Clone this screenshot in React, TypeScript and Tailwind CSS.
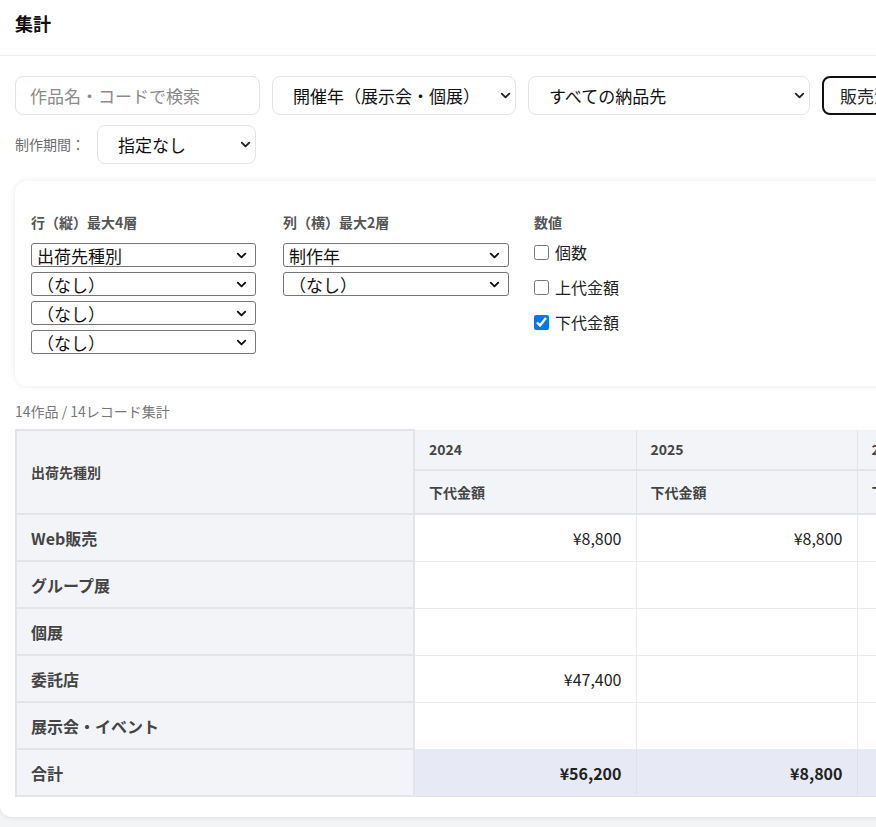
import React from 'react';
import { ChevronDown } from 'lucide-react';

const rowLayers = ['出荷先種別', '（なし）', '（なし）', '（なし）'];
const colLayers = ['制作年', '（なし）'];
const years = ['2024', '2025', '2026'];

const rows = [
  { name: 'Web販売', values: ['¥8,800', '¥8,800', ''] },
  { name: 'グループ展', values: ['', '', ''] },
  { name: '個展', values: ['', '', ''] },
  { name: '委託店', values: ['¥47,400', '', ''] },
  { name: '展示会・イベント', values: ['', '', ''] },
];
const totals = ['¥56,200', '¥8,800', '', '¥65,000'];

// native-looking compact select used in the pivot settings
function LayerSelect({ value }: { value: string }) {
  return (
    <div className="flex h-[24px] w-full items-center justify-between rounded-[3px] border border-[#767676] bg-white pl-[5px] pr-[6px] text-[17px] leading-none text-[#111]">
      <span>{value}</span>
      <ChevronDown className="h-[15px] w-[15px]" strokeWidth={3} />
    </div>
  );
}

function FilterSelect({ value, width }: { value: string; width: string }) {
  return (
    <div className={`relative h-[39px] ${width}`}>
      <select className="h-full w-full appearance-none rounded-lg border border-[#e3e4e8] bg-white px-5 text-[17px] text-[#111]">
        <option>{value}</option>
      </select>
      <ChevronDown className="pointer-events-none absolute right-[3px] top-[12px] h-[15px] w-[15px]" strokeWidth={3} />
    </div>
  );
}

export default function App() {
  return (
    <div className="min-h-screen overflow-hidden bg-[#f3f4f6] font-['Noto_Sans_CJK_JP',sans-serif] text-[#222]">
      <div className="w-[1240px] rounded-b-xl bg-white pb-5 shadow-[0_1px_4px_rgba(0,0,0,0.08)]">
        <div className="border-b border-[#ececec] px-[15px] pt-[10px] pb-[18px]">
          <h1 className="text-[18px] font-bold leading-[27px] text-[#111]">集計</h1>
        </div>

        <div className="px-[15px] pt-5">
          <div className="flex items-center gap-3">
            <input
              placeholder="作品名・コードで検索"
              className="h-[39px] w-[245px] rounded-lg border border-[#e3e4e8] px-[14px] text-[17px] placeholder:text-[#8a8a8a]"
            />
            <FilterSelect value="開催年（展示会・個展）" width="w-[244px]" />
            <FilterSelect value="すべての納品先" width="w-[282px]" />
            <button className="h-[39px] shrink-0 whitespace-nowrap rounded-lg border-2 border-[#111] px-4 text-[17px]">
              販売済のみ表示
            </button>
          </div>

          <div className="mt-[10px] flex items-center gap-3">
            <span className="text-[14px] text-[#6b6b6b]">制作期間：</span>
            <FilterSelect value="指定なし" width="w-[159px]" />
          </div>

          <div className="mt-[17px] rounded-xl bg-white px-4 pt-[31px] pb-[32px] shadow-[0_0_6px_rgba(0,0,0,0.09)]">
            <div className="flex gap-[27px]">
              <div className="w-[225px]">
                <div className="mb-[11px] text-[14px] font-bold leading-5 text-[#555]">行（縦）最大4層</div>
                <div className="flex flex-col gap-[5px]">
                  {rowLayers.map((v, i) => (
                    <LayerSelect key={i} value={v} />
                  ))}
                </div>
              </div>
              <div className="w-[226px]">
                <div className="mb-[11px] text-[14px] font-bold leading-5 text-[#555]">列（横）最大2層</div>
                <div className="flex flex-col gap-[5px]">
                  {colLayers.map((v, i) => (
                    <LayerSelect key={i} value={v} />
                  ))}
                </div>
              </div>
              <div className="-ml-[2px]">
                <div className="text-[14px] font-bold leading-5 text-[#555]">数値</div>
                <div className="mt-2 flex flex-col gap-[11px]">
                  {[
                    ['個数', false],
                    ['上代金額', false],
                    ['下代金額', true],
                  ].map(([label, checked]) => (
                    <label key={label as string} className="flex h-6 items-center gap-[6px] text-[16px] text-[#222]">
                      <input type="checkbox" defaultChecked={checked as boolean} className="h-[15px] w-[15px]" />
                      {label}
                    </label>
                  ))}
                </div>
              </div>
            </div>
          </div>

          <div className="mt-[15px] text-[14px] leading-5 text-[#777]">14作品 / 14レコード集計</div>

          <table className="mt-[8px] w-[1222px] table-fixed border-collapse">
            <colgroup>
              <col className="w-[398px]" />
              <col className="w-[222px]" />
              <col className="w-[221px]" />
              <col className="w-[221px]" />
              <col className="w-[160px]" />
            </colgroup>
            <thead>
              <tr>
                <th
                  rowSpan={2}
                  className="border-2 border-[#e3e4e8] bg-[#f3f4f7] pl-[14px] text-left text-[14px] font-bold text-[#444]"
                >
                  出荷先種別
                </th>
                {years.map((y) => (
                  <th key={y} className="h-[40px] border-x border-b-2 border-[#e3e4e8] bg-[#f3f4f7] pl-[14px] text-left text-[14px] font-bold text-[#444]">
                    {y}
                  </th>
                ))}
                <th className="h-[40px] border-x border-b-2 border-[#e3e4e8] bg-[#f3f4f7] pl-[14px] text-left text-[14px] font-bold text-[#444]">
                  合計
                </th>
              </tr>
              <tr>
                {[...years, 'total'].map((y) => (
                  <th key={y} className="h-[44px] border-x border-b-2 border-[#e3e4e8] bg-[#f3f4f7] pl-[14px] text-left text-[14px] font-bold text-[#444]">
                    下代金額
                  </th>
                ))}
              </tr>
            </thead>
            <tbody>
              {rows.map((r) => (
                <tr key={r.name}>
                  <td className="h-[47px] border-x-2 border-b-2 border-[#e3e4e8] bg-[#f3f4f7] pl-[14px] text-[16px] font-bold text-[#444]">
                    {r.name}
                  </td>
                  {r.values.map((v, i) => (
                    <td key={i} className="border border-[#e9eaee] pr-[14px] text-right text-[16px] text-[#222]">
                      {v}
                    </td>
                  ))}
                  <td className="border border-[#e9eaee] pr-[14px] text-right text-[16px] text-[#222]">
                    {r.values.find(Boolean) ?? ''}
                  </td>
                </tr>
              ))}
              <tr>
                <td className="h-[47px] border-x-2 border-b-2 border-[#e3e4e8] bg-[#f3f4f7] pl-[14px] text-[16px] font-bold text-[#444]">
                  合計
                </td>
                {totals.map((v, i) => (
                  <td key={i} className="border border-[#e0e2ea] bg-[#e7e9f4] pr-[14px] text-right text-[16px] font-bold text-[#222]">
                    {v}
                  </td>
                ))}
              </tr>
            </tbody>
          </table>
        </div>
      </div>
    </div>
  );
}
